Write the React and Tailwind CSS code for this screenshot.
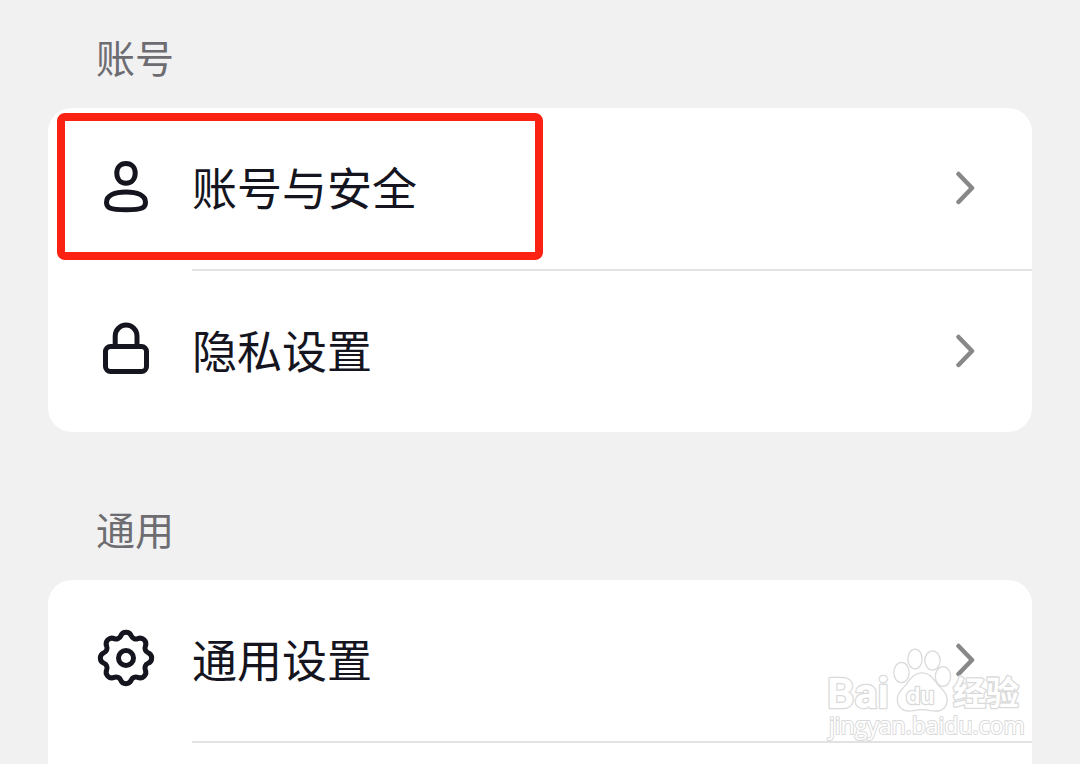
const GEAR = { cx: 30, cy: 27, lobes: 8, lobeCenter: 19.8, lobeRadius: 5.7, notchCenter: 26, notchRadius: 5 };

function gearPath({ cx, cy, lobes, lobeCenter, lobeRadius, notchCenter, notchRadius }) {
  const at = (r, a) => [cx + r * Math.sin(a), cy - r * Math.cos(a)];
  const half = Math.PI / lobes;
  const t = lobeRadius / (lobeRadius + notchRadius);
  const join = ([x1, y1], [x2, y2]) => `${(x1 + (x2 - x1) * t).toFixed(2)} ${(y1 + (y2 - y1) * t).toFixed(2)}`;
  let d = "";
  for (let i = 0; i < lobes; i++) {
    const a = i * 2 * half;
    const lobe = at(lobeCenter, a);
    const before = join(lobe, at(notchCenter, a - half));
    const after = join(lobe, at(notchCenter, a + half));
    d += i === 0 ? `M${before}` : `A${notchRadius} ${notchRadius} 0 0 0 ${before}`;
    d += `A${lobeRadius} ${lobeRadius} 0 0 1 ${after}`;
  }
  const first = join(at(lobeCenter, 0), at(notchCenter, -half));
  return `${d}A${notchRadius} ${notchRadius} 0 0 0 ${first}Z`;
}

function Icon({ children }) {
  return (
    <svg
      aria-hidden="true"
      className="size-15 shrink-0 overflow-visible"
      viewBox="0 0 60 60"
      fill="none"
      stroke="currentColor"
      strokeWidth="5"
      strokeLinejoin="round"
      strokeLinecap="round"
    >
      {children}
    </svg>
  );
}

function UserIcon() {
  return (
    <Icon>
      <path d="M30 4.500c5.600 0 9.200 3.800 9.200 9.500 0 6-3.600 10.300-9.200 10.300s-9.200-4.300-9.200-10.300C20.800 8.300 24.400 4.500 30 4.500Z" />
      <path d="M30 33c11 0 19.500 3.200 19.500 10.500 0 5-2.500 7.200-19.500 7.200s-19.500-2.200-19.500-7.200C10.500 36.200 19 33 30 33Z" />
    </Icon>
  );
}

function LockIcon() {
  return (
    <Icon>
      <path d="M19.200 24V14a10.900 11 0 0 1 21.800 0V24" />
      <rect x="9.500" y="24.500" width="41" height="25" rx="5" />
    </Icon>
  );
}

function GearIcon() {
  return (
    <Icon>
      <path d={gearPath(GEAR)} />
      <circle cx="30" cy="27" r="7.500" />
    </Icon>
  );
}

function Chevron() {
  return (
    <svg
      aria-hidden="true"
      className="h-9 w-6 shrink-0 text-[#888888]"
      viewBox="0 0 24 36"
      fill="none"
      stroke="currentColor"
      strokeWidth="4.500"
      strokeLinecap="round"
      strokeLinejoin="round"
    >
      <path d="M6.500 3 20 17 6.500 31" />
    </svg>
  );
}

function Row({ icon, label, highlighted }) {
  return (
    <button type="button" className="relative flex h-[161px] w-full items-center gap-9 pr-14 pl-12 text-left">
      {icon}
      <span className="flex-1 pb-1 text-[45px] leading-15">{label}</span>
      <Chevron />
      {highlighted && (
        <span className="pointer-events-none absolute top-[5px] left-[9px] h-[147px] w-[486px] rounded-lg border-8 border-[#fb2113]" />
      )}
    </button>
  );
}

function Divider() {
  return <div className="ml-36 h-0.5 bg-[#e2e2e2]" />;
}

function Heading({ children }) {
  return <h2 className="px-12 pt-8 pb-7 text-[39px] leading-12 text-[#6d6d71]">{children}</h2>;
}

function Watermark() {
  return (
    <svg
      role="img"
      aria-label="Baidu"
      className="pointer-events-none absolute right-12 bottom-5 h-25 w-52"
      viewBox="0 0 208 100"
      fill="#ffffff"
      stroke="#dadada"
      strokeWidth="2.600"
      strokeLinejoin="round"
      paintOrder="stroke"
    >
      <ellipse cx="77.500" cy="28.500" rx="7" ry="9.500" />
      <ellipse cx="91" cy="15" rx="6.500" ry="9.200" />
      <ellipse cx="108.500" cy="16.500" rx="7" ry="9" />
      <ellipse cx="119" cy="32.500" rx="7" ry="9.200" />
      <path d="M98 29.500c8 0 11 6 15 11 5 6 9.500 9 9.500 15 0 8-5 11-11 11-5 0-8-1.500-13.500-1.500S90 66.500 85 66.500c-6 0-11-4-11-11 0-6 4-9 9-15 4-5 7-11 15-11Z" />
      <text x="3" y="64" fontSize="43" fontWeight="700" fontFamily="Roboto, sans-serif">
        Bai
      </text>
      <text x="82" y="60" fontSize="23" fontWeight="600" fontFamily="Inter, sans-serif">
        du
      </text>
      <text x="129" y="61" fontSize="33" fontWeight="700" fontFamily="Noto Sans CJK SC, sans-serif">
        经验
      </text>
      <text x="5" y="90" fontSize="23" fontWeight="400" strokeWidth="2" fontFamily="Open Sans, sans-serif">
        jingyan.baidu.com
      </text>
    </svg>
  );
}

export default function App() {
  return (
    <main className="relative flex h-screen flex-col overflow-hidden bg-[#f1f1f1] px-12 font-['Noto_Sans_CJK_SC',sans-serif] text-[#15151f]">
      <section>
        <Heading>账号</Heading>
        <div className="rounded-3xl bg-white">
          <Row icon={<UserIcon />} label="账号与安全" highlighted />
          <Divider />
          <Row icon={<LockIcon />} label="隐私设置" />
        </div>
      </section>
      <section className="mt-10 flex flex-1 flex-col">
        <Heading>通用</Heading>
        <div className="flex-1 rounded-t-3xl bg-white">
          <Row icon={<GearIcon />} label="通用设置" />
          <Divider />
        </div>
      </section>
      <Watermark />
    </main>
  );
}
